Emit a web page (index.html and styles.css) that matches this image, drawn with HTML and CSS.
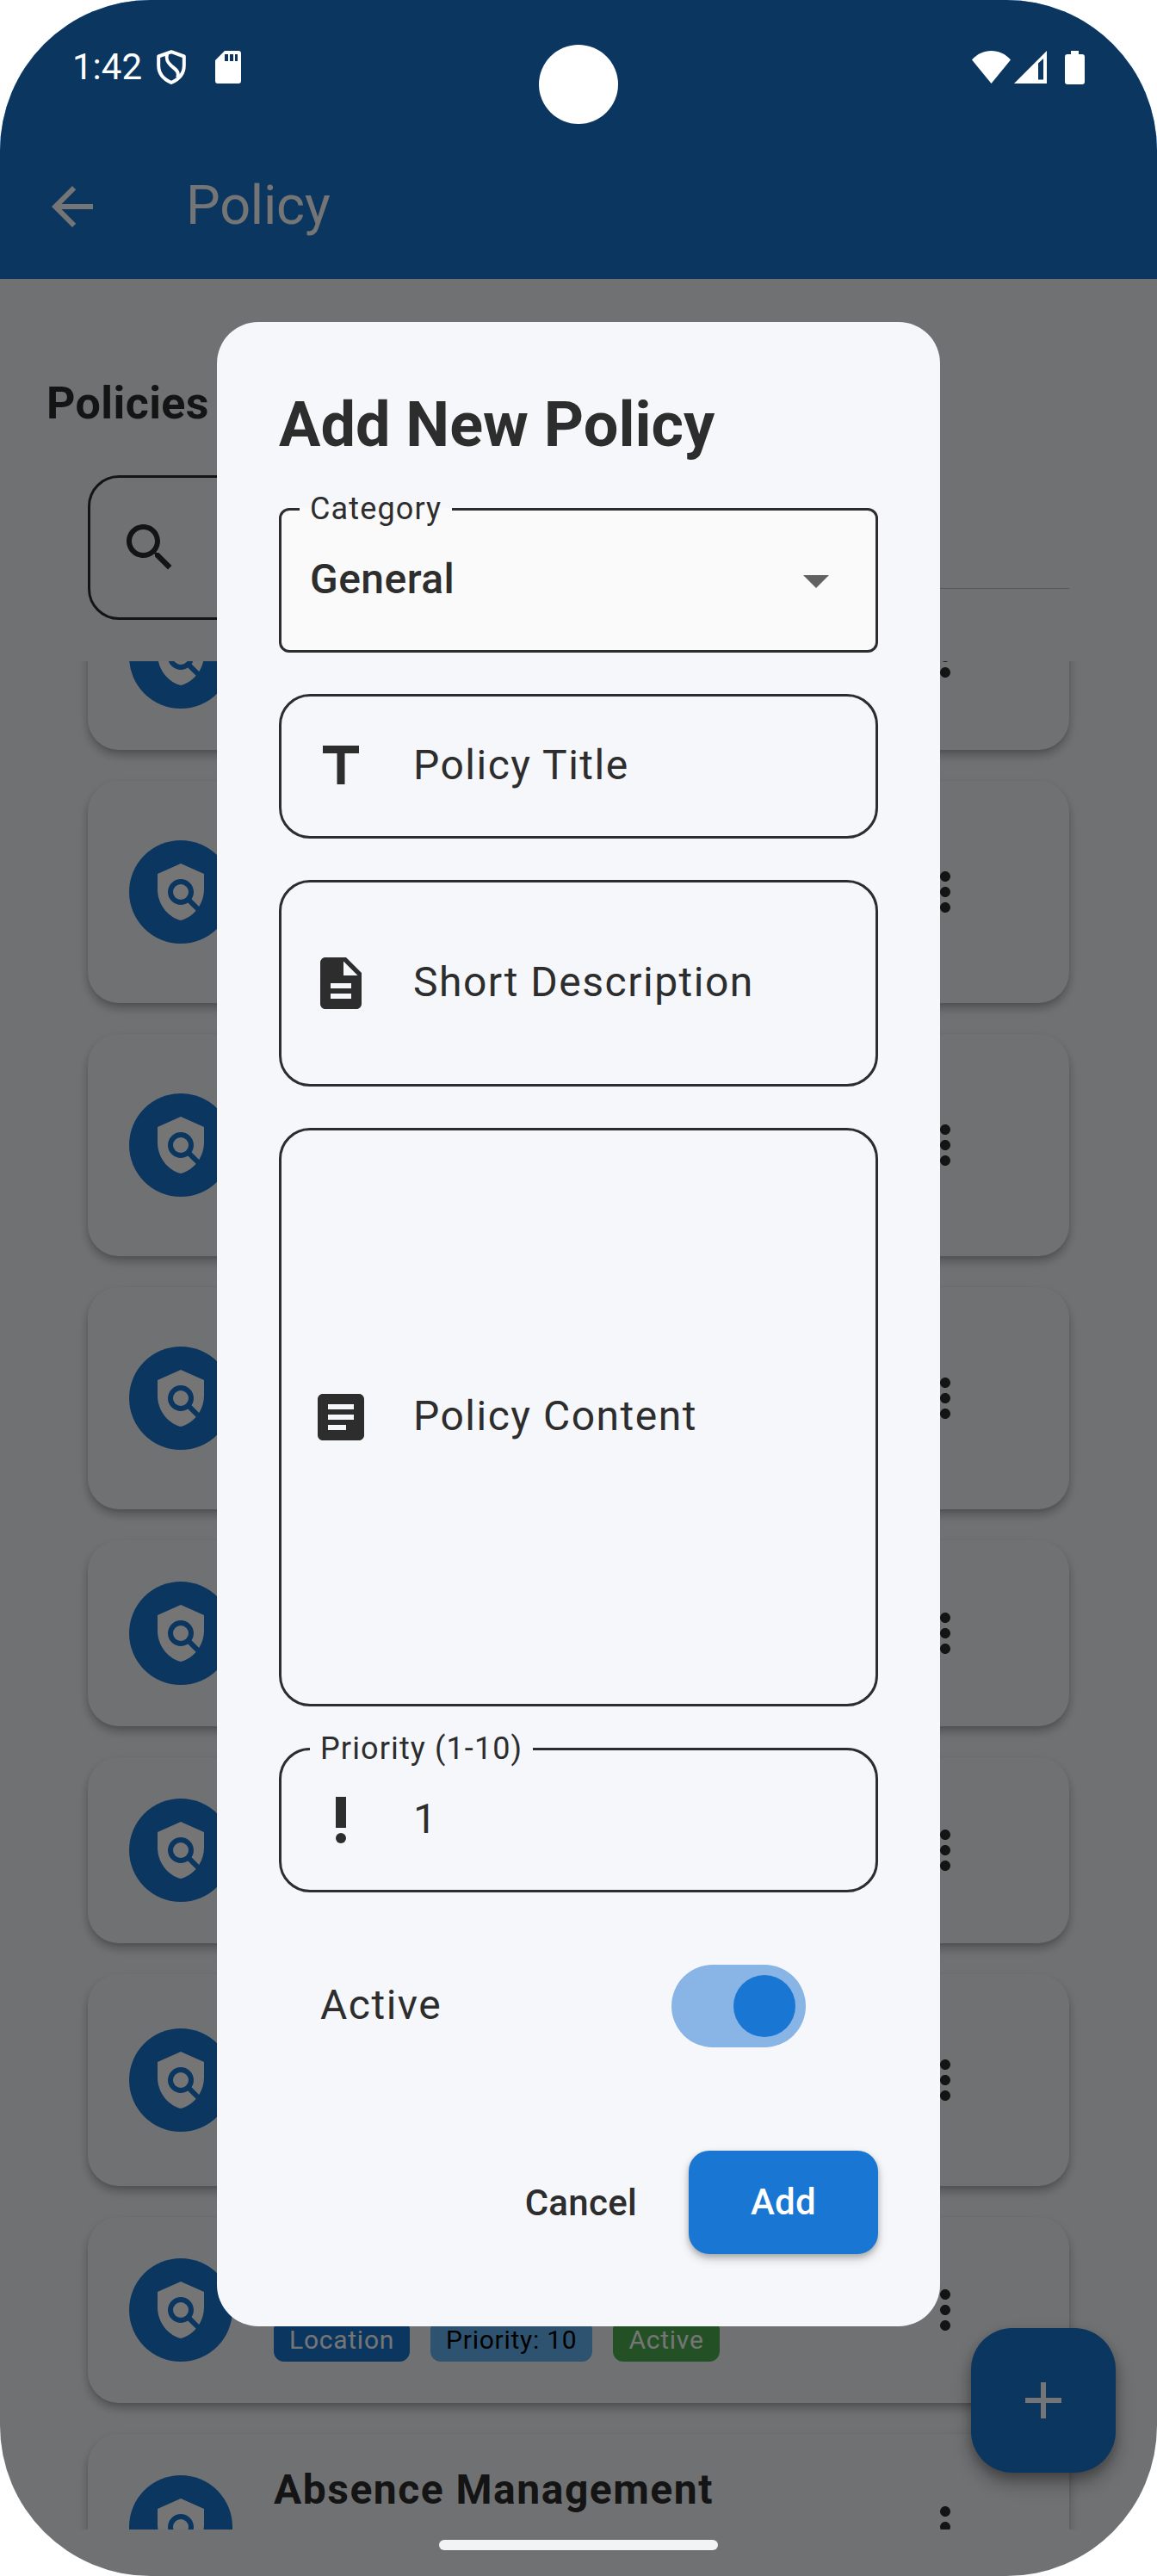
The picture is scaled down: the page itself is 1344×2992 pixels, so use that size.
FILE: index.html
```html
<!DOCTYPE html>
<html lang="en">
<head>
<meta charset="utf-8">
<title>Policy</title>
<link rel="stylesheet" href="styles.css">
</head>
<body>
<svg class="sprite" aria-hidden="true">
  <symbol id="shield" viewBox="0 0 24 24">
    <path d="M21 5l-9-4-9 4v6c0 5.55 3.84 10.74 9 12 2.3-.56 4.33-1.9 5.88-3.71l-3.12-3.12c-1.94 1.29-4.58 1.07-6.29-.64-1.95-1.95-1.95-5.12 0-7.07 1.95-1.95 5.12-1.95 7.07 0 1.71 1.71 1.92 4.35.64 6.29l2.9 2.9C20.29 15.69 21 13.38 21 11V5z"/>
    <circle cx="12" cy="12" r="3"/>
  </symbol>
  <symbol id="more" viewBox="0 0 24 24">
    <path d="M12 8c1.1 0 2-.9 2-2s-.9-2-2-2-2 .9-2 2 .9 2 2 2zm0 2c-1.1 0-2 .9-2 2s.9 2 2 2 2-.9 2-2-.9-2-2-2zm0 6c-1.1 0-2 .9-2 2s.9 2 2 2 2-.9 2-2-.9-2-2-2z"/>
  </symbol>
</svg>
<div class="phone">
  <div class="screen">
    <header class="appbar">
      <svg class="icon" viewBox="0 0 24 24"><path d="M20 11H7.83l5.59-5.59L12 4l-8 8 8 8 1.41-1.41L7.83 13H20v-2z"/></svg>
      <h1 class="appbar-title">Policy</h1>
    </header>
    <h2 class="heading">Policies</h2>
    <div class="filters">
      <div class="search">
        <svg class="icon" viewBox="0 0 24 24"><path d="M15.5 14h-.79l-.28-.27C15.41 12.59 16 11.11 16 9.5 16 5.91 13.09 3 9.5 3S3 5.91 3 9.5 5.91 16 9.5 16c1.61 0 3.09-.59 4.23-1.57l.27.28v.79l5 4.99L20.49 19l-4.99-5zm-6 0C7.01 14 5 11.99 5 9.5S7.01 5 9.5 5 14 7.01 14 9.5 11.99 14 9.5 14z"/></svg>
      </div>
      <div class="filter-select"></div>
    </div>
    <main class="list">
      <article class="card first"><span class="avatar"><svg class="icon"><use href="#shield"/></svg></span><div class="info"></div><svg class="icon menu"><use href="#more"/></svg></article>
      <article class="card tall"><span class="avatar"><svg class="icon"><use href="#shield"/></svg></span><div class="info"></div><svg class="icon menu"><use href="#more"/></svg></article>
      <article class="card tall"><span class="avatar"><svg class="icon"><use href="#shield"/></svg></span><div class="info"></div><svg class="icon menu"><use href="#more"/></svg></article>
      <article class="card tall"><span class="avatar"><svg class="icon"><use href="#shield"/></svg></span><div class="info"></div><svg class="icon menu"><use href="#more"/></svg></article>
      <article class="card"><span class="avatar"><svg class="icon"><use href="#shield"/></svg></span><div class="info"></div><svg class="icon menu"><use href="#more"/></svg></article>
      <article class="card"><span class="avatar"><svg class="icon"><use href="#shield"/></svg></span><div class="info"></div><svg class="icon menu"><use href="#more"/></svg></article>
      <article class="card medium"><span class="avatar"><svg class="icon"><use href="#shield"/></svg></span><div class="info"></div><svg class="icon menu"><use href="#more"/></svg></article>
      <article class="card"><span class="avatar"><svg class="icon"><use href="#shield"/></svg></span>
        <div class="info info-end">
          <div class="chips">
            <span class="chip chip-category">Location</span>
            <span class="chip chip-priority">Priority: 10</span>
            <span class="chip chip-active">Active</span>
          </div>
        </div>
        <svg class="icon menu"><use href="#more"/></svg></article>
      <article class="card"><span class="avatar"><svg class="icon"><use href="#shield"/></svg></span>
        <div class="info"><h3 class="card-title">Absence Management</h3></div>
        <svg class="icon menu"><use href="#more"/></svg></article>
    </main>
    <div class="fab"><svg class="icon" viewBox="0 0 24 24"><path d="M19 13h-6v6h-2v-6H5v-2h6V5h2v6h6v2z"/></svg></div>
  </div>

  <div class="scrim">
    <form class="dialog">
      <h2 class="dialog-title">Add New Policy</h2>
      <div class="field field-select">
        <label class="float-label">Category</label>
        <span class="value strong">General</span>
        <svg class="icon caret" viewBox="0 0 24 24"><path d="M7 10l5 5 5-5z"/></svg>
      </div>
      <div class="field">
        <svg class="icon" viewBox="0 0 24 24"><path d="M5 4v3h5.5v12h3V7H19V4z"/></svg>
        <span class="value">Policy Title</span>
      </div>
      <div class="field field-description">
        <svg class="icon" viewBox="0 0 24 24"><path d="M14 2H6c-1.1 0-1.99.9-1.99 2L4 20c0 1.1.89 2 1.99 2H18c1.1 0 2-.9 2-2V8l-6-6zm2 16H8v-2h8v2zm0-4H8v-2h8v2zm-3-5V3.500L18.500 9H13z"/></svg>
        <span class="value">Short Description</span>
      </div>
      <div class="field field-content">
        <svg class="icon" viewBox="0 0 24 24"><path d="M19 3H5c-1.1 0-2 .9-2 2v14c0 1.1.9 2 2 2h14c1.1 0 2-.9 2-2V5c0-1.100-.9-2-2-2zm-5 14H7v-2h7v2zm3-4H7v-2h10v2zm0-4H7V7h10v2z"/></svg>
        <span class="value">Policy Content</span>
      </div>
      <div class="field">
        <label class="float-label float-label-inset">Priority (1-10)</label>
        <svg class="icon" viewBox="0 0 24 24"><circle cx="12" cy="19" r="2"/><path d="M10 3h4v12h-4z"/></svg>
        <span class="value">1</span>
      </div>
      <div class="switch-row">
        <span class="value">Active</span>
        <span class="switch"><span class="thumb"></span></span>
      </div>
      <div class="actions">
        <span class="cancel">Cancel</span>
        <span class="add">Add</span>
      </div>
    </form>
  </div>

  <div class="statusbar">
    <span class="clock">1:42</span>
    <svg class="status-shield" viewBox="0 0 34 40"><path d="M17 2.200L31.800 7.500V18C31.800 28 25 34.500 17 38 9 34.500 2.200 28 2.200 18V7.500z"/><path d="M12 4.500C10.500 11 12.500 14.500 17 18.500S27 25 24 32"/></svg>
    <svg class="status-sd" viewBox="0 0 30 38"><path d="M11 0H27a3 3 0 0 1 3 3V35a3 3 0 0 1-3 3H3a3 3 0 0 1-3-3V11zM11 4v8h4V4zm6 0v8h4V4zm6 0v8h3V4z"/></svg>
    <svg class="status-wifi" viewBox="0 0 45 38"><path d="M0 10.500C6 3.500 14 0 22.500 0S39 3.500 45 10.500L22.500 38z"/></svg>
    <svg class="status-signal" viewBox="0 0 38 38"><path fill-rule="evenodd" d="M0 38L38 0V38zM28 14.500V33.500H34V9z"/></svg>
    <svg class="status-battery" viewBox="0 0 23 39"><path d="M7 0h9v4h4a3 3 0 0 1 3 3v29a3 3 0 0 1-3 3H3a3 3 0 0 1-3-3V7a3 3 0 0 1 3-3h4z"/></svg>
  </div>
  <div class="camera"></div>
  <div class="home-pill"></div>
</div>
</body>
</html>
```
FILE: styles.css
```css
* { box-sizing: border-box; }

body {
  margin: 0;
  background: #fff;
  font-family: Roboto, sans-serif;
  color: #2d2d2d;
}

h1, h2, h3 { margin: 0; }

.sprite { display: none; }

.icon {
  display: block;
  flex: none;
  width: 72px;
  height: 72px;
  fill: currentColor;
}

.phone {
  position: relative;
  width: 1344px;
  height: 2992px;
  overflow: hidden;
  border-radius: 175px;
}

.screen {
  display: flex;
  flex-direction: column;
  height: 2992px;
  padding-bottom: 54px;
  background: #f5f7fa;
}

/* App bar */
.appbar {
  display: flex;
  flex: none;
  align-items: center;
  gap: 96px;
  height: 324px;
  padding: 156px 48px 0;
  background: #1976d2;
  color: #fff;
}

.appbar-title {
  padding-bottom: 2px;
  font-size: 63px;
  font-weight: 400;
  line-height: 72px;
  letter-spacing: -.2px;
}

.heading {
  flex: none;
  margin: 115px 54px 53px;
  font-size: 52px;
  font-weight: 700;
  line-height: 60px;
  letter-spacing: .4px;
}

.filters {
  display: flex;
  flex: none;
  gap: 48px;
  height: 168px;
  margin: 0 102px 48px;
}

.search {
  display: flex;
  align-items: center;
  flex: 1;
  padding-left: 33px;
  border: 3px solid #2d2d2d;
  border-radius: 36px;
}

.filter-select {
  width: 420px;
  height: 132px;
  border-bottom: 1px solid #bdbdbd;
}

/* Policy list */
.list {
  display: flex;
  flex: 1;
  flex-direction: column;
  gap: 36px;
  min-height: 0;
  padding: 0 102px;
  overflow: hidden;
}

.card {
  display: flex;
  flex: none;
  align-items: center;
  gap: 48px;
  height: 216px;
  padding: 0 108px 0 48px;
  border-radius: 36px;
  background: #f5f7fa;
  box-shadow: 0 3px 3px rgba(0, 0, 0, .04), 0 6px 12px rgba(0, 0, 0, .28);
}

.card.first { margin-top: -113px; }
.card.tall { height: 258px; }
.card.medium { height: 246px; }

.avatar {
  display: grid;
  flex: none;
  place-items: center;
  width: 120px;
  height: 120px;
  border-radius: 50%;
  background: #1976d2;
  color: #fff;
}

.info {
  display: flex;
  flex: 1;
  flex-direction: column;
  align-self: stretch;
  padding: 37px 0 48px;
}

.info-end { justify-content: flex-end; }

.menu { fill: #2d2d2d; }

.card-title {
  font-size: 48px;
  font-weight: 700;
  line-height: 56px;
  letter-spacing: 1.5px;
}

.chips {
  display: flex;
  gap: 24px;
}

.chip {
  padding: 6px 18px 7px;
  border-radius: 12px;
  color: #fff;
  font-size: 30px;
  line-height: 36px;
  letter-spacing: .75px;
}

.chip-category { background: #1976d2; }
.chip-priority { background: #64b5f6; color: #000; }
.chip-active { background: #4caf50; }

.fab {
  position: absolute;
  right: 48px;
  bottom: 120px;
  display: grid;
  place-items: center;
  width: 168px;
  height: 168px;
  border-radius: 48px;
  background: #1976d2;
  color: #fff;
  box-shadow: 0 12px 24px rgba(0, 0, 0, .3), 0 6px 12px rgba(0, 0, 0, .2);
}

/* Modal */
.scrim {
  position: absolute;
  inset: 0;
  padding: 374px 252px 0;
  background: rgba(0, 0, 0, .541);
}

.dialog {
  display: flex;
  flex-direction: column;
  gap: 48px;
  height: 2328px;
  padding: 78px 72px 84px;
  border-radius: 48px;
  background: #f5f7fb;
}

.dialog-title {
  margin-bottom: 6px;
  font-size: 72px;
  font-weight: 700;
  line-height: 84px;
}

.field {
  position: relative;
  display: flex;
  flex: none;
  align-items: center;
  gap: 48px;
  height: 168px;
  padding: 0 33px;
  border: 3px solid #2d2d2d;
  border-radius: 36px;
}

.field-select {
  justify-content: space-between;
  border-radius: 12px;
  background: #fafafa;
}

.field-description { height: 240px; }
.field-content { height: 672px; }

.float-label {
  position: absolute;
  top: -24px;
  left: 21px;
  padding: 0 12px;
  background: linear-gradient(#fafafa, #fafafa) center / 100% 4px no-repeat;
  font-size: 36px;
  line-height: 45px;
  letter-spacing: 1.125px;
}

.float-label-inset {
  left: 33px;
  background-image: linear-gradient(#f5f7fb, #f5f7fb);
}

.value {
  padding-bottom: 3px;
  font-size: 48px;
  line-height: 60px;
  letter-spacing: 1.5px;
}

.strong {
  font-weight: 500;
  letter-spacing: .45px;
}

.caret { fill: #616161; }

.switch-row {
  display: flex;
  align-items: center;
  justify-content: space-between;
  height: 96px;
  margin-top: 36px;
  padding: 0 84px 0 48px;
}

.switch {
  display: flex;
  justify-content: flex-end;
  width: 156px;
  padding: 12px;
  border-radius: 48px;
  background: #88b4e6;
}

.thumb {
  width: 72px;
  height: 72px;
  border-radius: 50%;
  background: #1976d2;
}

.actions {
  display: flex;
  align-items: center;
  justify-content: flex-end;
  gap: 60px;
  height: 120px;
  margin-top: 72px;
  font-size: 42px;
  font-weight: 500;
  letter-spacing: .3px;
}

.add {
  width: 220px;
  border-radius: 24px;
  background: #1976d2;
  box-shadow: 0 3px 6px rgba(0, 0, 0, .2), 0 6px 12px rgba(0, 0, 0, .18);
  color: #fff;
  line-height: 120px;
  text-align: center;
}

/* System chrome */
.statusbar {
  position: absolute;
  inset: 0 0 auto;
  display: flex;
  align-items: center;
  height: 156px;
  padding: 0 84px;
  color: #fff;
  fill: #fff;
}

.clock {
  font-size: 42px;
  line-height: 50px;
}

.status-shield {
  width: 34px;
  height: 40px;
  margin-left: 17px;
  fill: none;
  stroke: #fff;
  stroke-width: 4;
  stroke-linejoin: round;
}

.status-sd {
  width: 30px;
  height: 38px;
  margin-left: 34px;
}

.status-wifi {
  width: 45px;
  height: 38px;
  margin-left: auto;
}

.status-signal {
  width: 38px;
  height: 38px;
  margin-left: 4px;
}

.status-battery {
  width: 23px;
  height: 39px;
  margin-left: 21px;
}

.camera {
  position: absolute;
  top: 52px;
  left: 626px;
  width: 92px;
  height: 92px;
  border-radius: 50%;
  background: #fff;
}

.home-pill {
  position: absolute;
  bottom: 30px;
  left: 510px;
  width: 324px;
  height: 12px;
  border-radius: 6px;
  background: #f3f3f3;
}
```
